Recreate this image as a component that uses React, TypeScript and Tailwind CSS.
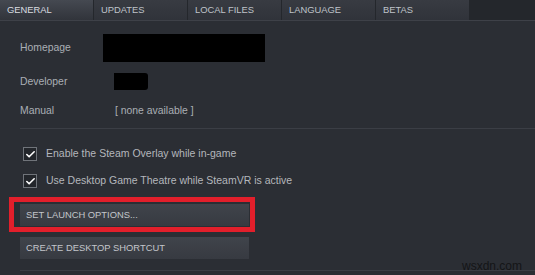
import { Check } from 'lucide-react'

const tabs = ['GENERAL', 'UPDATES', 'LOCAL FILES', 'LANGUAGE', 'BETAS']

function Tab({ label, active }: { label: string; active: boolean }) {
  return (
    <div
      className={
        active
          ? 'flex h-full w-[93px] items-center bg-gradient-to-b from-[#454951] to-[#31343b] pl-[7px] text-[#d9dce0]'
          : 'flex h-full w-[93px] items-center bg-gradient-to-b from-[#383b42] to-[#30333a] pl-[7px] text-[#bfc3c9]'
      }
    >
      {label}
    </div>
  )
}

function CheckRow({ label }: { label: string }) {
  return (
    <div className="flex h-[14px] items-center">
      <div className="ml-[23px] flex h-[14px] w-[14px] items-center justify-center border border-[#70747a] bg-[#23262b]">
        <Check size={11} strokeWidth={3.5} className="text-white" />
      </div>
      <span className="ml-[9px] text-[10.5px] text-[#b4b7bc]">{label}</span>
    </div>
  )
}

function ActionButton({ label }: { label: string }) {
  return (
    <div className="flex h-[22px] w-[229px] items-center bg-gradient-to-b from-[#40444b] to-[#373a41] pl-[6px] text-[9.4px] text-[#c3c6cb]">
      {label}
    </div>
  )
}

export default function App() {
  return (
    <div
      className="relative h-[275px] w-[535px] overflow-hidden bg-[#2b2e34]"
      style={{ fontFamily: '"Liberation Sans", Arial, sans-serif' }}
    >
      <div className="flex h-[21px] gap-px border-b border-[#3e4148] bg-[#24272c] text-[9.4px]">
        {tabs.map((t, i) => (
          <Tab key={t} label={t} active={i === 0} />
        ))}
      </div>

      <div className="pl-[20px] text-[10.4px] text-[#aaaeb4]">
        <div className="mt-[13px] flex h-[28px] items-center">
          <span className="w-[83px]">Homepage</span>
          <div className="h-[28px] w-[162px] bg-black" />
        </div>
        <div className="mt-[11px] flex h-[17px] items-center">
          <span className="w-[94px]">Developer</span>
          <div className="h-[17px] w-[34px] rounded-r-[3px] bg-black" />
        </div>
        <div className="mt-[12px] flex h-[17px] items-center">
          <span className="w-[95px]">Manual</span>
          <span>[ none available ]</span>
        </div>
        <div className="mt-[9px] h-px bg-[#3b3e45]" />
      </div>

      <div className="mt-[18px] flex flex-col gap-[13px]">
        <CheckRow label="Enable the Steam Overlay while in-game" />
        <CheckRow label="Use Desktop Game Theatre while SteamVR is active" />
      </div>

      <div className="ml-[20px] mt-[16px] flex flex-col items-start gap-[11px]">
        <div className="relative">
          <ActionButton label="SET LAUNCH OPTIONS..." />
          <div className="pointer-events-none absolute -bottom-[6px] -left-[11px] -right-[6px] -top-[7px] border-[5px] border-[#e21f2b]" />
        </div>
        <ActionButton label="CREATE DESKTOP SHORTCUT" />
      </div>

      <div className="ml-[20px] mt-[11px] h-px bg-[#3b3e45]" />

      <span className="absolute left-[462px] top-[257px] text-[12px] text-[#141517]">wsxdn.com</span>
    </div>
  )
}
